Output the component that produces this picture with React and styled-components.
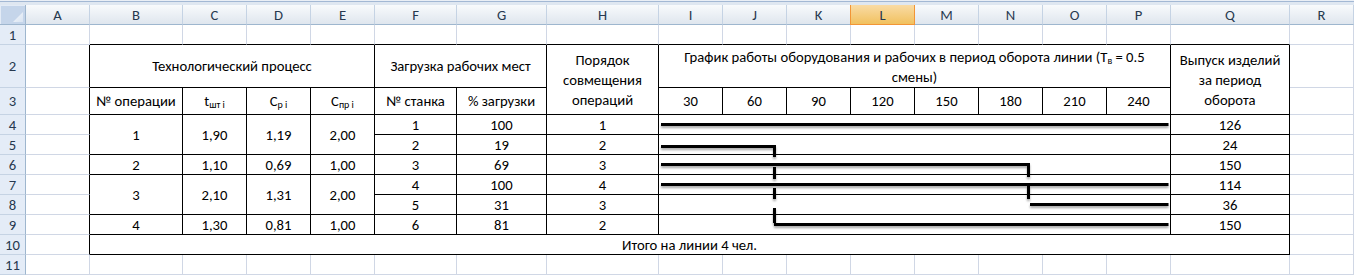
import React from "react";
import styled, { createGlobalStyle } from "styled-components";

const FONT = `Carlito, Calibri, Lato, "Open Sans", sans-serif`;

const Global = createGlobalStyle`
  html, body { margin: 0; padding: 0; background: #fff; overflow: hidden; }
`;

const Sheet = styled.div`
  width: 1354px;
  height: 275px;
  overflow: hidden;
  display: flex;
  flex-direction: column;
  background: #fff;
`;

const TopStrip = styled.div`
  height: 5px;
  flex: none;
  background: linear-gradient(#eaeff6 0 1px, #a3b8d4 1px 2px, #dfe7f1 2px 5px);
`;

const Grid = styled.div`
  display: grid;
  grid-template-columns: 26px 64px 93px 64px 64px 64px 82px 90px 112px repeat(8, 64px) 119px 64px;
  grid-template-rows: 20px 20px 43px 27px repeat(8, 20px);
`;

const Corner = styled.div`
  grid-column: 1;
  grid-row: 1;
  box-sizing: border-box;
  border-right: 1px solid #9eb6ce;
  border-bottom: 1px solid #9eb6ce;
  background: #c5d5ea;
  box-shadow: inset 1px 1px 0 #e3ebf6;
  display: flex;
  align-items: flex-end;
  justify-content: flex-end;
  padding: 0 2px 2px 0;
`;

const CornerTriangle = styled.span`
  width: 10px;
  height: 10px;
  background: linear-gradient(135deg, #f4f7fb, #d9e4f2);
  clip-path: polygon(100% 0, 100% 100%, 0 100%);
`;

const ColHead = styled.div`
  grid-column: ${(p) => p.$col};
  grid-row: 1;
  box-sizing: border-box;
  border-right: 1px solid #c5d3e4;
  border-bottom: 1px solid #9eb6ce;
  background: linear-gradient(#f8fafc, #dfe6ee);
  display: flex;
  align-items: center;
  justify-content: center;
  font-family: ${FONT};
  font-size: 14.67px;
  color: #27394f;
  ${(p) =>
    p.$active &&
    `
    margin-left: -1px;
    border-left: 1px solid #f29536;
    border-right: 1px solid #f29536;
    border-bottom: 1px solid #f29536;
    background: linear-gradient(#f9dba5, #f1c15f);
  `}
`;

const RowHead = styled.div`
  grid-column: 1;
  grid-row: ${(p) => p.$row};
  box-sizing: border-box;
  border-right: 1px solid #9eb6ce;
  border-bottom: 1px solid #c5d3e4;
  background: #e4ecf7;
  display: flex;
  align-items: center;
  justify-content: center;
  font-family: ${FONT};
  font-size: 14.67px;
  color: #27394f;
`;

const Cell = styled.div`
  grid-column: ${(p) => p.$col} / span ${(p) => p.$cs || 1};
  grid-row: ${(p) => p.$row} / span ${(p) => p.$rs || 1};
  box-sizing: border-box;
  border-right: 1px solid ${(p) => p.$rc || "#000"};
  border-bottom: 1px solid ${(p) => p.$bc || "#000"};
  background: #fff;
  display: flex;
  align-items: ${(p) => (p.$bottom ? "flex-end" : "center")};
  justify-content: center;
  text-align: center;
  font-family: ${FONT};
  font-size: 14.67px;
  line-height: 20px;
  color: #000;
  white-space: nowrap;
  overflow: hidden;
`;

const Sub = styled.sub`
  font-size: 0.68em;
  vertical-align: -0.25em;
  line-height: 0;
`;

const Chart = styled.svg`
  grid-column: 10 / span 8;
  grid-row: 5 / span 6;
  z-index: 2;
  width: 512px;
  height: 120px;
  pointer-events: none;
  overflow: visible;
  filter: drop-shadow(0.5px 2px 1.2px rgba(0, 0, 0, 0.35));
`;

const LETTERS = "ABCDEFGHIJKLMNOPQR".split("");
const DEF = "#d0d7e5";

// table content: excel row, grid col, spans
const T = [];
const add = (r, c, content, o = {}) => T.push({ r, c, content, ...o });

add(2, 3, "Технологический процесс", { cs: 4 });
add(2, 7, "Загрузка рабочих мест", { cs: 2 });
add(2, 9, <>Порядок<br />совмещения<br />операций</>, { rs: 2 });
add(
  2,
  10,
  <>
    График работы оборудования и рабочих в период оборота линии (Т<Sub>в</Sub> = 0.5
    <br />
    смены)
  </>,
  { cs: 8, bottom: true }
);
add(2, 18, <>Выпуск изделий<br />за период<br />оборота</>, { rs: 2 });

add(3, 3, "№ операции");
add(3, 4, <>t<Sub>шт i</Sub></>);
add(3, 5, <>C<Sub>р i</Sub></>);
add(3, 6, <>C<Sub>пр i</Sub></>);
add(3, 7, "№ станка");
add(3, 8, "% загрузки");
[30, 60, 90, 120, 150, 180, 210, 240].forEach((v, i) => add(3, 10 + i, String(v)));

// operations
add(4, 3, "1", { rs: 2 });
add(4, 4, "1,90", { rs: 2 });
add(4, 5, "1,19", { rs: 2 });
add(4, 6, "2,00", { rs: 2 });
add(6, 3, "2");
add(6, 4, "1,10");
add(6, 5, "0,69");
add(6, 6, "1,00");
add(7, 3, "3", { rs: 2 });
add(7, 4, "2,10", { rs: 2 });
add(7, 5, "1,31", { rs: 2 });
add(7, 6, "2,00", { rs: 2 });
add(9, 3, "4");
add(9, 4, "1,30");
add(9, 5, "0,81");
add(9, 6, "1,00");

const stations = [
  ["1", "100", "1", "126"],
  ["2", "19", "2", "24"],
  ["3", "69", "3", "150"],
  ["4", "100", "4", "114"],
  ["5", "31", "3", "36"],
  ["6", "81", "2", "150"],
];
stations.forEach(([s, p, o, q], i) => {
  const r = 4 + i;
  add(r, 7, s);
  add(r, 8, p);
  add(r, 9, o);
  add(r, 10, "", { cs: 8 });
  add(r, 18, q);
});
add(10, 3, "Итого на линии 4 чел.", { cs: 16 });

const covered = new Set();
T.forEach(({ r, c, cs = 1, rs = 1 }) => {
  for (let i = 0; i < rs; i++) for (let j = 0; j < cs; j++) covered.add(`${r + i}-${c + j}`);
});

const empties = [];
for (let r = 1; r <= 11; r++) {
  for (let c = 2; c <= 19; c++) {
    if (covered.has(`${r}-${c}`)) continue;
    const rc = c === 2 && r >= 2 && r <= 10 ? "#000" : DEF;
    const bc = r === 1 && c >= 3 && c <= 18 ? "#000" : DEF;
    empties.push({ r, c, rc, bc });
  }
}

// chart lines (local coords in the I4:P9 area)
const H = [
  [2, 509.5, 9.5],
  [2, 116, 31.5],
  [2, 370.5, 49.5],
  [2, 509.5, 69.5],
  [371, 509.5, 89.5],
  [115, 509.5, 109.5],
];
const V = [
  [115.5, 30, 42],
  [115.5, 52, 64],
  [115.5, 73, 84],
  [115.5, 93, 108],
  [369.5, 48, 62],
  [369.5, 71, 84],
];

export default function App() {
  return (
    <Sheet>
      <Global />
      <TopStrip />
      <Grid>
        <Corner>
          <CornerTriangle />
        </Corner>
        {LETTERS.map((l, i) => (
          <ColHead key={l} $col={i + 2} $active={l === "L"}>
            {l}
          </ColHead>
        ))}
        {Array.from({ length: 11 }, (_, i) => (
          <RowHead key={i} $row={i + 2}>
            {i + 1}
          </RowHead>
        ))}
        {empties.map(({ r, c, rc, bc }) => (
          <Cell key={`e${r}-${c}`} $row={r + 1} $col={c} $rc={rc} $bc={bc} />
        ))}
        {T.map(({ r, c, cs, rs, content, bottom }) => (
          <Cell key={`t${r}-${c}`} $row={r + 1} $col={c} $cs={cs} $rs={rs} $bottom={bottom}>
            <span>{content}</span>
          </Cell>
        ))}
        <Chart viewBox="0 0 512 120">
          <g stroke="#000" strokeWidth="3" fill="none">
            {H.map(([x1, x2, y], i) => (
              <line key={`h${i}`} x1={x1} x2={x2} y1={y} y2={y} />
            ))}
            {V.map(([x, y1, y2], i) => (
              <line key={`v${i}`} x1={x} x2={x} y1={y1} y2={y2} />
            ))}
          </g>
        </Chart>
      </Grid>
    </Sheet>
  );
}
